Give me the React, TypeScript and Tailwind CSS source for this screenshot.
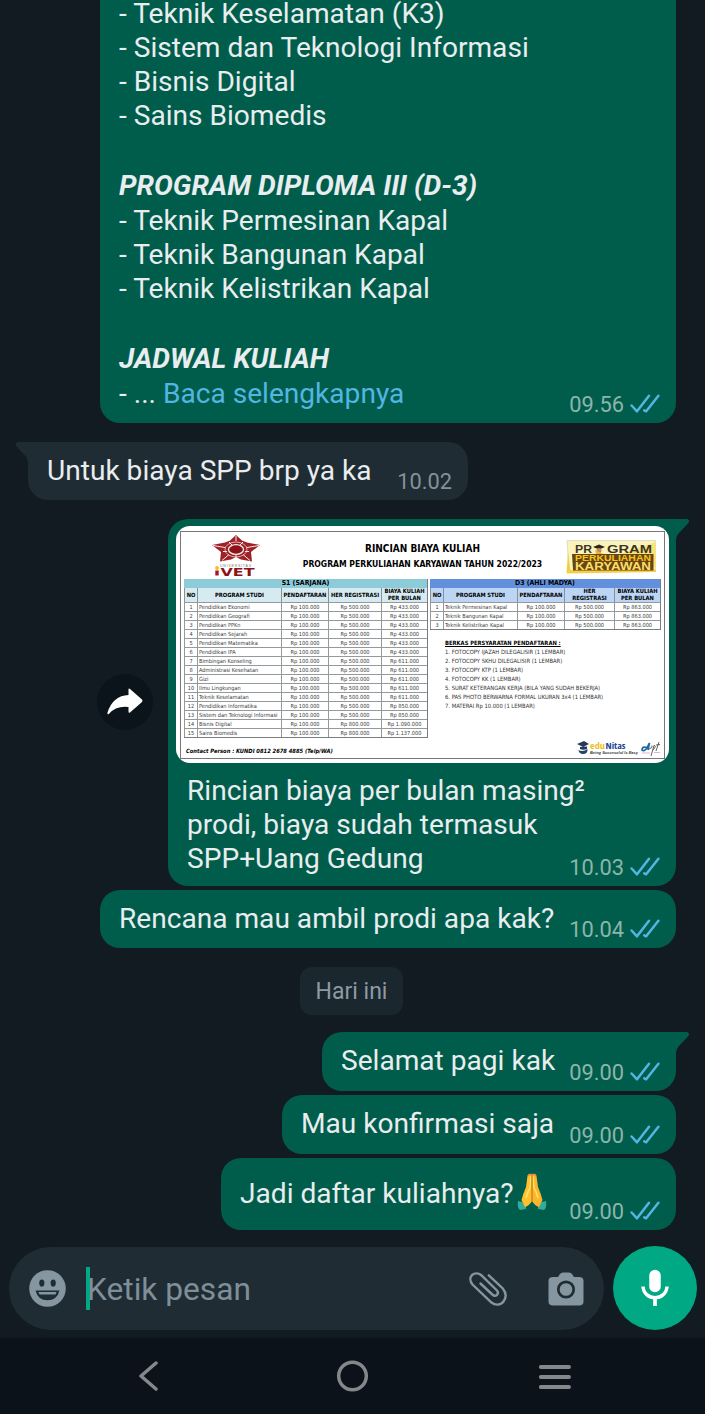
import React from "react";

const S1: [string, string, string][] = [
  ["Pendidikan Ekonomi", "500.000", "433.000"],
  ["Pendidikan Geografi", "500.000", "433.000"],
  ["Pendidikan PPKn", "500.000", "433.000"],
  ["Pendidikan Sejarah", "500.000", "433.000"],
  ["Pendidikan Matematika", "500.000", "433.000"],
  ["Pendidikan IPA", "500.000", "433.000"],
  ["Bimbingan Konseling", "500.000", "611.000"],
  ["Administrasi Kesehatan", "500.000", "611.000"],
  ["Gizi", "500.000", "611.000"],
  ["Ilmu Lingkungan", "500.000", "611.000"],
  ["Teknik Keselamatan", "500.000", "611.000"],
  ["Pendidikan Informatika", "500.000", "850.000"],
  ["Sistem dan Teknologi Informasi", "500.000", "850.000"],
  ["Bisnis Digital", "800.000", "1.090.000"],
  ["Sains Biomedis", "800.000", "1.137.000"],
];

const D3: [string, string, string][] = [
  ["Teknik Permesinan Kapal", "500.000", "863.000"],
  ["Teknik Bangunan Kapal", "500.000", "863.000"],
  ["Teknik Kelistrikan Kapal", "500.000", "863.000"],
];

const REQUIREMENTS = [
  "1. FOTOCOPY IJAZAH DILEGALISIR (1 LEMBAR)",
  "2. FOTOCOPY SKHU DILEGALISIR (1 LEMBAR)",
  "3. FOTOCOPY KTP (1 LEMBAR)",
  "4. FOTOCOPY KK (1 LEMBAR)",
  "5. SURAT KETERANGAN KERJA (BILA YANG SUDAH BEKERJA)",
  "6. PAS PHOTO BERWARNA FORMAL UKURAN 3x4 (1 LEMBAR)",
  "7. MATERAI Rp 10.000 (1 LEMBAR)",
];

function Ticks() {
  return (
    <svg className="-mt-[2px]" width="30" height="20" viewBox="0 0 30 20" fill="none" stroke="#53b5e2" strokeWidth="2.5" strokeLinecap="round" strokeLinejoin="round">
      <path d="M1.600 11.500 L7 17.300 L19 1.800" />
      <path d="M14.300 16.300 L16.200 17.300 L28.400 1.800" />
    </svg>
  );
}

function Meta({ time }: { time: string }) {
  return (
    <div className="flex shrink-0 items-center gap-[6px] pb-[6px]">
      <span className="text-[21.8px] leading-6 text-[#8cb5ab]">{time}</span>
      <Ticks />
    </div>
  );
}

function TailRight() {
  return (
    <svg className="absolute left-full top-0 -ml-px" width="15" height="22" viewBox="0 0 15 22">
      <path d="M0 0 H12 Q15.5 1 13 4.500 L4 14 Q1 17 1 22 L0 22 Z" fill="#005d4b" />
    </svg>
  );
}

function TailLeft() {
  return (
    <svg className="absolute right-full top-0 -mr-px" width="14" height="22" viewBox="0 0 14 22">
      <path d="M14 0 H3 Q-1 1 1.500 4.500 L10 13.500 Q13 17 13 22 L14 22 Z" fill="#1f2c33" />
    </svg>
  );
}

function IvetLogo() {
  return (
    <svg width="52" height="44" viewBox="0 0 52 44">
      <path d="M26 0 L32 5.500 L37 7.500 L50 10 L41 17 L42 26.500 L31 24.500 L26 22 L21 24.500 L10 26.500 L11 17 L2 10 L15 7.500 L20 5.500 Z" fill="#a02028" />
      <ellipse cx="26" cy="14.500" rx="7.500" ry="4.800" fill="#8d1118" stroke="#f7e9e8" strokeWidth="1.300" />
      <g stroke="#f7e9e8" strokeWidth="1" fill="none">
        <path d="M26 1 V6 M3 10.500 L15 12.500 M49 10.500 L37 12.500 M12 25.500 L19 19.500 M40 25.500 L33 19.500 M19 7 L22 10 M33 7 L30 10 M26 20 V23 M13 16.500 L17 16.500 M39 16.500 L35 16.500" />
        <ellipse cx="26" cy="14.500" rx="11" ry="7.500" strokeWidth="0.700" />
      </g>
      <text x="10" y="31.500" fontSize="3.500" fill="#777" textLength="31" fontFamily="Liberation Sans">UNIVERSITAS</text>
      <circle cx="7" cy="33" r="1.900" fill="#f4c020" />
      <path d="M5.300 35.500 H8.700 V40.500 H5.300 Z" fill="#a8171f" />
      <text x="10.500" y="40.500" fontSize="10" fontWeight="bold" fill="#8e1118" textLength="34" lengthAdjust="spacingAndGlyphs" fontFamily="DejaVu Sans">VET</text>
    </svg>
  );
}

function ProgramLogo() {
  return (
    <svg width="92" height="34" viewBox="0 0 92 34">
      <path d="M2 .5 H90.500 V31 H4 Z" fill="#fbf3bd" stroke="#c9c3a4" strokeWidth="0.5" />
      <path d="M1.500 33.500 L3 12 L5.500 30 L91 29.500 V32 Z" fill="#f2cf45" />
      <path d="M55 14 L91 2 V27 H60 Z" fill="#f8e27c" />
      <path d="M7 14 H88.500 V30.500 H8 Z" fill="#69450f" />
      <text x="10" y="12.800" fontSize="10.200" fontWeight="bold" fill="#3c3524" textLength="17" lengthAdjust="spacingAndGlyphs" fontFamily="Liberation Sans">PR</text>
      <text x="42" y="12.800" fontSize="10.200" fontWeight="bold" fill="#3c3524" textLength="45" lengthAdjust="spacingAndGlyphs" fontFamily="Liberation Sans">GRAM</text>
      <path d="M28 7 L34 4.500 L40 7 L34 9.500 Z" fill="#302817" />
      <circle cx="34" cy="10.500" r="2.500" fill="#c28a6d" />
      <path d="M30 10 L38 14 H31 Z" fill="#e8b735" />
      <text x="10" y="21.400" fontSize="8.400" fontWeight="bold" fill="#f6c51f" textLength="76" lengthAdjust="spacingAndGlyphs" fontFamily="Liberation Sans">PERKULIAHAN</text>
      <text x="10" y="29.700" fontSize="10.600" fontWeight="bold" fill="#f9df69" textLength="76" lengthAdjust="spacingAndGlyphs" fontFamily="Liberation Sans">KARYAWAN</text>
    </svg>
  );
}

function FooterLogos() {
  return (
    <svg width="84" height="17" viewBox="0 0 84 17">
      <path d="M0 4 L7 1 L12 4 L6 7 Z M3 7 L10 6.500 V9 Q6 10.500 3 9 Z" fill="#283a5a" />
      <path d="M1.500 10 Q6 12.500 10.500 9 Q11 14 6 14 Q2 14 1.500 10 Z" fill="#27436b" />
      <text x="13" y="9" fontSize="8" fontWeight="bold" fill="#ecc12c" textLength="15" lengthAdjust="spacingAndGlyphs" fontFamily="Open Sans">edu</text>
      <text x="28.500" y="9" fontSize="8" fontWeight="bold" fill="#1d4695" textLength="20" lengthAdjust="spacingAndGlyphs" fontFamily="Open Sans">Nitas</text>
      <text x="13" y="13.800" fontSize="4" fontWeight="bold" fontStyle="italic" fill="#333" textLength="48" lengthAdjust="spacingAndGlyphs" fontFamily="Liberation Sans">Being Successful Is Easy</text>
      <path d="M70 7.500 Q65 6 65 10 Q67 12 70 8 L72.500 3 L71 10" fill="none" stroke="#1f6aa5" strokeWidth="1.700" />
      <path d="M72 9 Q76 8 75 5.500 M74 16 L77 5.500 Q80 5.500 76 10 M82 2 L79 11 M79 5 L83 4.500" fill="none" stroke="#555" strokeWidth="0.900" />
      <path d="M65 13 H73 M77 12.500 H83" stroke="#d597b1" strokeWidth="0.700" />
    </svg>
  );
}

function FeeTable({ title, cols, rows, tone, herLabel }: { title: string; cols: string; rows: [string, string, string][]; tone: string; herLabel: React.ReactNode }) {
  const cell = "flex items-center justify-center border-l border-[#8a9295]";
  const bodyCell = "flex items-center justify-center border-l border-t border-[#949a9c] pt-px";
  return (
    <div className="border-r border-b border-[#777f82]">
      <div className={`flex h-[9px] items-center justify-center text-[6.9px] font-bold leading-none ${tone === "teal" ? "bg-[#8ecbd8]" : "bg-[#6290dc]"}`}>{title}</div>
      <div className={`grid h-[14px] whitespace-nowrap text-center text-[5.75px] font-bold leading-[7px] ${cols} ${tone === "teal" ? "bg-[#d5ebf1]" : "bg-[#bdd5f5]"}`}>
        <div className={cell}>NO</div>
        <div className={cell}>PROGRAM STUDI</div>
        <div className={cell}>PENDAFTARAN</div>
        <div className={cell}>{herLabel}</div>
        <div className={cell}>BIAYA KULIAH<br />PER BULAN</div>
      </div>
      {rows.map(([name, her, fee], i) => (
        <div key={name} className={`grid h-[9px] whitespace-nowrap text-[5.6px] leading-none text-[#3c3c3c] ${cols}`}>
          <div className={bodyCell}>{i + 1}</div>
          <div className="flex items-center border-l border-t border-[#949a9c] pl-px pt-px">{name}</div>
          <div className={bodyCell}>Rp 100.000</div>
          <div className={bodyCell}>Rp {her}</div>
          <div className={bodyCell}>Rp {fee}</div>
        </div>
      ))}
    </div>
  );
}

function Brochure() {
  return (
    <div className="h-[237px] w-[493px] overflow-hidden rounded-[14px] bg-white px-1 py-[5px] text-black [font-family:'DejaVu_Sans_Condensed','DejaVu_Sans',sans-serif] [font-stretch:condensed]">
      <div className="flex h-[228px] flex-col border border-[#777]">
        <div className="flex h-[47px] shrink-0 justify-between">
          <div className="ml-[29px] mt-[3px] w-[52px]"><IvetLogo /></div>
          <div className="flex flex-col items-center whitespace-nowrap pl-[18px] pt-[11px] font-bold">
            <div className="text-[10px] leading-[12px]">RINCIAN BIAYA KULIAH</div>
            <div className="mt-[3px] text-[8.56px] leading-[12px]">PROGRAM PERKULIAHAN KARYAWAN TAHUN 2022/2023</div>
          </div>
          <div className="mr-[7px] mt-[8px]"><ProgramLogo /></div>
        </div>
        <div className="flex gap-[2px] pl-[3px]">
          <div className="w-[244px]">
            <FeeTable title="S1 (SARJANA)" tone="teal" cols="grid-cols-[13px_84px_47px_53px_46px]" rows={S1} herLabel="HER REGISTRASI" />
          </div>
          <div className="w-[231px]">
            <FeeTable title="D3 (AHLI MADYA)" tone="blue" cols="grid-cols-[13px_74px_47px_50px_46px]" rows={D3} herLabel={<>HER<br />REGISTRASI</>} />
            <div className="mt-[9px] whitespace-nowrap pl-[15px] text-[5.8px] leading-[9px] text-[#333]">
              <div className="font-bold text-black underline">BERKAS PERSYARATAN PENDAFTARAN :</div>
              {REQUIREMENTS.map((r) => <div key={r}>{r}</div>)}
            </div>
          </div>
        </div>
        <div className="flex grow items-start justify-between pl-[5px] pr-[3px]">
          <div className="mt-[9px] text-[5.75px] font-bold italic leading-[9px]">Contact Person : KUNDI 0812 2678 4885 (Telp/WA)</div>
          <div className="mt-[2px]"><FooterLogos /></div>
        </div>
      </div>
    </div>
  );
}

function PrayingHands() {
  return (
    <svg width="30" height="38" viewBox="0 0 30 38">
      <path d="M1 28 Q0 35 3 37 L9 36 L9 30 Z" fill="#35ab9c" />
      <path d="M29 28 Q30 35 27 37 L21 36 L21 30 Z" fill="#35ab9c" />
      <path d="M15 1 Q11 0 10.500 3 L9 14 Q6 21 4.500 27 L8 34 Q12 33 15 28 Z" fill="#fdc02f" />
      <path d="M15 1 Q19 0 19.500 3 L21 14 Q24 21 25.500 27 L22 34 Q18 33 15 28 Z" fill="#fdb62b" />
      <path d="M14 2 L13 15 Q10 20 9 25 M16 2 L17 15 Q20 20 21 25" fill="none" stroke="#ffe16a" strokeWidth="1.500" />
      <path d="M15 1 V28" stroke="#c8781c" strokeWidth="1.200" />
      <path d="M11 3 Q13 0 15 3 Q17 0 19 3" fill="none" stroke="#ee8b32" strokeWidth="1.500" />
    </svg>
  );
}

export default function App() {
  return (
    <div className="flex h-[1414px] w-[705px] flex-col overflow-hidden bg-[#111b21] text-[28.1px] leading-[34px] text-[#e9edef] [font-family:Roboto,sans-serif]">
      <main className="flex h-[1246px] shrink-0 flex-col items-end whitespace-nowrap pr-[29px]">
        <section className="flex h-[423px] w-[576px] shrink-0 items-end justify-between rounded-b-[20px] bg-[#005d4b] pl-[19px] pr-4">
          <div className="self-start">
            <div className="-mt-[3px]">- Teknik Keselamatan (K3)</div>
            <div>- Sistem dan Teknologi Informasi</div>
            <div>- Bisnis Digital</div>
            <div>- Sains Biomedis</div>
            <div className="mt-[36px] font-bold italic">PROGRAM DIPLOMA III (D-3)</div>
            <div className="mt-px">- Teknik Permesinan Kapal</div>
            <div>- Teknik Bangunan Kapal</div>
            <div>- Teknik Kelistrikan Kapal</div>
            <div className="mt-[36px] font-bold italic">JADWAL KULIAH</div>
            <div className="mt-px">- ... <span className="text-[#53b5e2]">Baca selengkapnya</span></div>
          </div>
          <div className="-ml-[200px]"><Meta time="09.56" /></div>
        </section>

        <section className="relative mr-auto ml-[28px] mt-[19px] flex h-[58px] w-[440px] shrink-0 justify-between rounded-[20px] rounded-tl-none bg-[#1f2c33] pl-[19px] pr-4">
          <TailLeft />
          <div className="pt-[12px]">Untuk biaya SPP brp ya ka</div>
          <span className="self-end pb-[6px] text-[21.8px] leading-6 text-[#83919a]">10.02</span>
        </section>

        <div className="mt-[19px] flex shrink-0 items-center gap-[15px]">
          <div className="mb-[2px] flex size-14 items-center justify-center rounded-full bg-[#0b141a]">
            <svg width="36" height="27" viewBox="0 0 36 27"><path d="M21.500 1.500 Q21.500 0 23 1 L35 11.500 Q36 12.700 35 14 L23 24.500 Q21.500 25.500 21.500 23.500 V19 Q9 17.500 1.800 26 Q0 27 .5 24.500 Q6 7.500 21.500 7 Z" fill="#fff" /></svg>
          </div>
          <section className="relative flex h-[367px] w-[508px] flex-col rounded-[20px] rounded-tr-none bg-[#005d4b] pl-2 pt-[7px]">
            <TailRight />
            <Brochure />
            <div className="flex grow items-end justify-between pl-[11px] pr-4">
              <div className="self-start pt-[11px]">
                Rincian biaya per bulan masing²<br />prodi, biaya sudah termasuk<br />SPP+Uang Gedung
              </div>
              <div className="-ml-[100px]"><Meta time="10.03" /></div>
            </div>
          </section>
        </div>

        <section className="mt-1 flex h-[58px] w-[576px] shrink-0 items-end justify-between rounded-[20px] bg-[#005d4b] pl-[19px] pr-4">
          <div className="self-start pt-[12px]">Rencana mau ambil prodi apa kak?</div>
          <Meta time="10.04" />
        </section>

        <div className="-mr-[29px] mt-[19px] flex w-[705px] shrink-0 justify-center pr-[2px]">
          <div className="flex h-[48px] w-[103px] items-center justify-center rounded-[12px] bg-[#1b272e] pt-[2px] text-[23px] text-[#8d9aa2]">Hari ini</div>
        </div>

        <section className="relative mt-[17px] flex h-[59px] w-[354px] shrink-0 items-end justify-between rounded-[20px] rounded-tr-none bg-[#005d4b] pl-[19px] pr-4">
          <TailRight />
          <div className="self-start pt-[12px]">Selamat pagi kak</div>
          <Meta time="09.00" />
        </section>
        <section className="mt-1 flex h-[59px] w-[394px] shrink-0 items-end justify-between rounded-[20px] bg-[#005d4b] pl-[19px] pr-4">
          <div className="self-start pt-[12px]">Mau konfirmasi saja</div>
          <Meta time="09.00" />
        </section>
        <section className="mt-1 flex h-[72px] w-[455px] shrink-0 items-end justify-between rounded-[20px] bg-[#005d4b] pl-[19px] pr-4">
          <div className="flex self-start pt-[15px]">
            <span className="pt-[4px]">Jadi daftar kuliahnya?</span>
            <span className="ml-[3px]"><PrayingHands /></span>
          </div>
          <Meta time="09.00" />
        </section>
      </main>

      <footer className="flex h-[92px] shrink-0 items-start gap-[9px] pl-[9px]">
        <div className="mt-px flex h-[83px] w-[595px] items-center rounded-full bg-[#1f2c33] pl-[20px] pr-5">
          <svg width="37" height="37" viewBox="0 0 37 37">
            <circle cx="18.500" cy="18.500" r="18.300" fill="#8696a0" />
            <ellipse cx="12.800" cy="13" rx="2.600" ry="3.600" fill="#1f2c33" />
            <ellipse cx="24.200" cy="13" rx="2.600" ry="3.600" fill="#1f2c33" />
            <path d="M6.500 20.500 H30.500 Q28 30.300 18.500 30.300 Q9 30.300 6.500 20.500 Z" fill="#1f2c33" />
            <path d="M9.500 22 H27.500 L26.500 24.500 H10.500 Z" fill="#8696a0" />
          </svg>
          <div className="ml-[20px] h-[43px] w-[4px] bg-[#00a884]" />
          <div className="-ml-[3px] pt-[3px] text-[31.7px] text-[#7f8f99]">Ketik pesan</div>
          <svg className="ml-auto" width="38" height="34" viewBox="0 0 38 34" fill="none" stroke="#8696a0" strokeWidth="2.400" strokeLinecap="round">
            <path d="M19.800 3.300 L33.800 16.500 C37 20.500 37.500 25.500 34.500 29.500 C31.500 33.500 26 33.500 22.500 30.500 L3.500 12.500 C.8 9.500 .8 5.500 3 3 C5.500 .8 9.500 .8 12 3 L27.500 18 C29.300 19.800 29.300 21.500 28 22.800 C26.700 24 24.900 24 23.300 22.500 L11.500 11.500" />
          </svg>
          <svg className="ml-[41px]" width="36" height="34" viewBox="0 0 36 34">
            <path d="M5 5 H10 L12 2 Q13 .5 15 .5 H21 Q23 .5 24 2 L26 5 H31 Q35.500 5 35.500 9 V29.500 Q35.500 33.500 31 33.500 H5 Q.5 33.500 .5 29.500 V9 Q.5 5 5 5 Z" fill="#8696a0" />
            <circle cx="18" cy="17.500" r="7.700" fill="#8696a0" stroke="#1f2c33" strokeWidth="2.700" />
          </svg>
        </div>
        <div className="flex size-[84px] items-center justify-center rounded-full bg-[#00a884]">
          <svg width="28" height="38" viewBox="0 0 28 38" fill="none" stroke="#fff">
            <path d="M14 6.500 V17.500" strokeWidth="11.500" strokeLinecap="round" />
            <path d="M2 17.500 C3 32.500 25 32.500 26 17.500" strokeWidth="3.500" />
            <path d="M14 28 V37" strokeWidth="3.700" />
          </svg>
        </div>
      </footer>

      <nav className="flex h-[76px] shrink-0 items-center bg-[#0b1219] pl-[138px]">
        <svg width="22" height="30" viewBox="0 0 22 30" fill="none" stroke="#85888b" strokeWidth="3.500" strokeLinecap="round" strokeLinejoin="round"><path d="M18 2 L3 15 L18 28" /></svg>
        <svg className="ml-[177px]" width="32" height="32" viewBox="0 0 32 32"><circle cx="15.500" cy="16" r="13.800" fill="none" stroke="#85888b" strokeWidth="3.500" /></svg>
        <svg className="ml-[169px] mt-[2px]" width="33" height="26" viewBox="0 0 33 26" stroke="#85888b" strokeWidth="3.900" strokeLinecap="round"><path d="M2.800 3 H31 M2.800 13 H31 M2.800 23 H31" /></svg>
      </nav>
    </div>
  );
}
